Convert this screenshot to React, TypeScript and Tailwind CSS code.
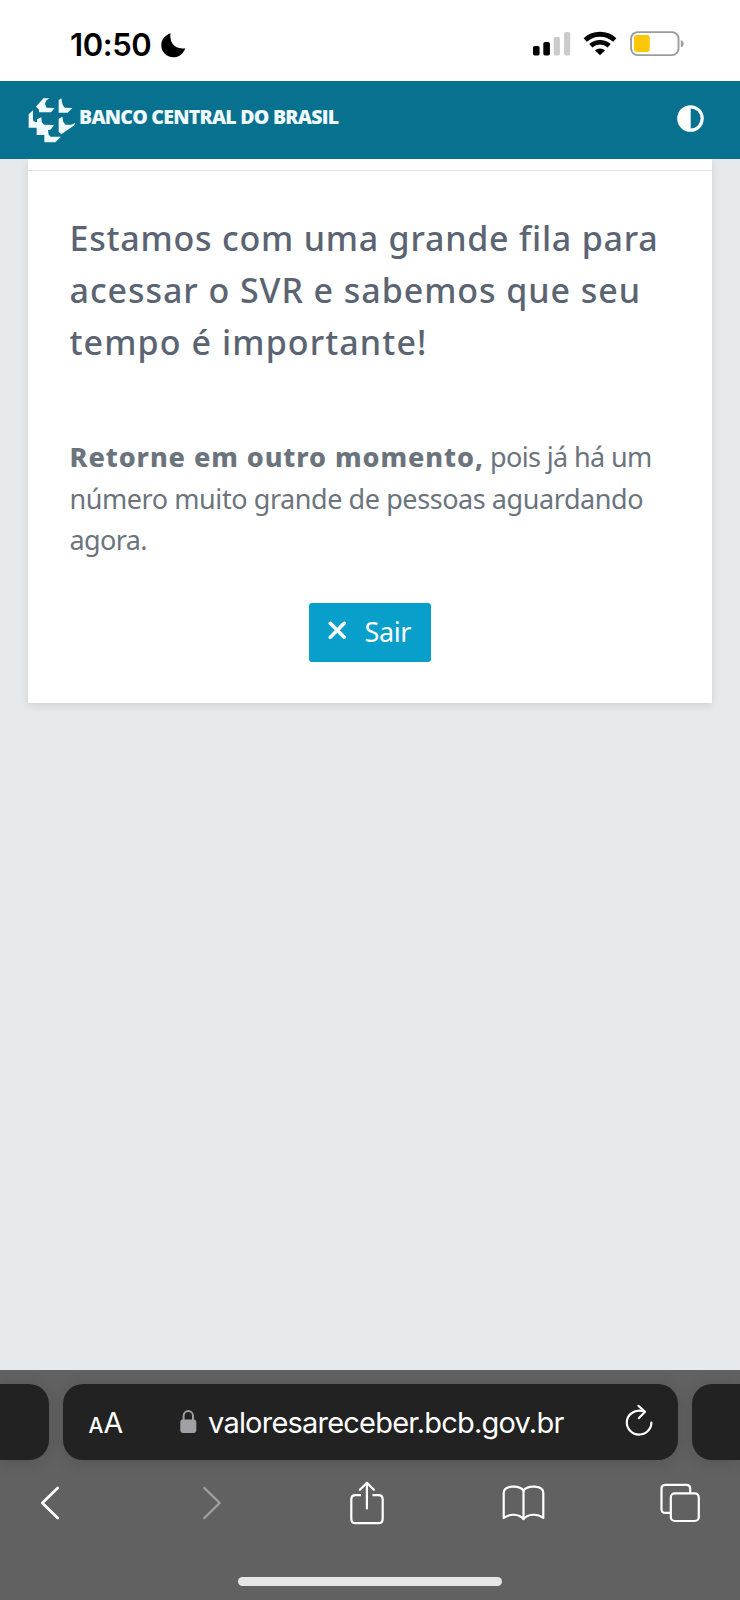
import React from 'react';

const StatusBar: React.FC = () => {
  return (
    <div className="flex h-[81px] items-start justify-between bg-white pl-[70px] pr-[55px] pt-[31px]">
      <div className="flex items-center">
        <span className="w-[90.5px] whitespace-nowrap font-['Inter'] text-[31px] font-semibold leading-[28px] tracking-[-0.4px] text-black">
          10:50
        </span>
        <svg width="25" height="25" viewBox="0 0 25 25" className="mt-px">
          <path d="M9.5 0.3C8.2 9.5 13.8 17 24.3 15.2C22.3 21 17.8 24.3 12.3 24.3C5.7 24.3 0.3 19 0.3 12.3C0.3 6.6 4 2.2 9.5 0.3Z" fill="#000" />
        </svg>
      </div>
      <div className="flex">
        <svg width="39" height="26" viewBox="0 0 39 26">
          <rect x="1" y="15" width="6.6" height="9.5" rx="1.8" fill="#000" />
          <rect x="11.3" y="11" width="6.6" height="13.5" rx="1.8" fill="#000" />
          <rect x="21.7" y="6" width="6.2" height="18.5" rx="1.8" fill="#cbcbcb" />
          <rect x="32" y="1" width="6.2" height="23.5" rx="1.8" fill="#cbcbcb" />
        </svg>
        <svg width="35" height="26" viewBox="0 0 35 26" className="ml-[12px]">
          <path d="M2.2 9C10.8 1.3 23.2 1.3 31.8 9" fill="none" stroke="#000" strokeWidth="4.8" />
          <path d="M7.8 14.8C13.2 10 20.8 10 26.2 14.8" fill="none" stroke="#000" strokeWidth="4.6" />
          <path d="M12 19.4C14.8 16.7 19.2 16.7 22 19.4L17 24.3Z" fill="#000" />
        </svg>
        <svg width="55" height="26" viewBox="0 0 55 26" className="ml-[12px]">
          <rect x="1.1" y="1.1" width="47.4" height="23" rx="6.5" fill="none" stroke="#9c9c9c" strokeWidth="1.9" />
          <rect x="4" y="4" width="15.8" height="17" rx="3" fill="#fbc708" />
          <path d="M50.8 9.2C54.6 10 54.6 15.4 50.8 16.2Z" fill="#9c9c9c" />
        </svg>
      </div>
    </div>
  );
};

const Header: React.FC = () => {
  return (
    <header className="relative z-10 flex h-[78px] items-center justify-between bg-[#08718f] pl-[28px] pr-[36px]">
      <div className="flex items-center">
        <svg width="49" height="47" viewBox="6 9 147 141" fill="#eefafd">
          <path d="M30 38L52 13H70L60 20L57 30L62 41L86 42L75 55H39V47Z" />
          <path d="M98 18L106 13L110 32L116 41L139 42L125 56H98Z" />
          <path d="M8 61L21 49V78L26 84H33V76L46 70L47 84L54 92L84 93L74 107L66 108L68 122L74 128H105L88 145H55V123H32V101H8Z" />
          <path d="M98 74L109 68L112 84L119 92H136L148 86L145 94L106 121L98 113Z" />
        </svg>
        <span className="ml-[2px] mt-[-6px] whitespace-nowrap font-['Open_Sans'] text-[19.5px] font-extrabold leading-none tracking-[-0.75px] text-[#eefafd]">
          BANCO CENTRAL DO BRASIL
        </span>
      </div>
      <svg width="27" height="27" viewBox="0 0 27 27" className="mt-[-3px]">
        <circle cx="13.5" cy="13.5" r="11.7" fill="none" stroke="#fff" strokeWidth="3.2" />
        <path d="M13.7 1A12.5 12.5 0 0 0 13.7 26Z" fill="#fff" />
      </svg>
    </header>
  );
};

const QueueCard: React.FC = () => {
  return (
    <main className="mx-[28px] h-[544px] bg-white font-['Noto_Sans',sans-serif] shadow-[0_3px_8px_rgba(0,0,0,0.1)]">
      <div className="h-[12px] border-b-[1.5px] border-[#dfe2e4]" />
      <div className="flex flex-col pl-[41.5px] pt-[41px]">
        <h1 className="whitespace-nowrap text-[34px] font-medium leading-[52px] text-[#5b6472]">
          <span className="block tracking-[0.78px]">Estamos com uma grande fila para</span>
          <span className="block tracking-[0.94px]">acessar o SVR e sabemos que seu</span>
          <span className="block tracking-[1.1px]">tempo é importante!</span>
        </h1>
        <p className="mt-[68px] whitespace-nowrap text-[27px] leading-[41.5px] text-[#6b747d]">
          <span className="flex">
            <strong className="w-[420.5px] font-extrabold tracking-[0.93px]">Retorne em outro momento,</strong>
            <span className="tracking-[-0.62px]">pois já há um</span>
          </span>
          <span className="block tracking-[-0.43px]">número muito grande de pessoas aguardando</span>
          <span className="block tracking-[-0.6px]">agora.</span>
        </p>
      </div>
      <button className="mx-auto mt-[42px] flex h-[59px] w-[122px] items-center rounded-[3px] bg-[#089fca] pl-[19px] text-white">
        <svg width="19" height="19" viewBox="0 0 19 19" className="mt-[-3px]">
          <path d="M2.3 2.3L16.2 16.2M16.2 2.3L2.3 16.2" stroke="#fff" strokeWidth="3.6" strokeLinecap="round" />
        </svg>
        <span className="ml-[17.5px] mt-[-2px] text-[27px] leading-none tracking-[-0.4px]">Sair</span>
      </button>
    </main>
  );
};

const AddressBar: React.FC = () => {
  return (
    <div className="flex h-[76px] gap-[14px]">
      <div className="w-[48.5px] shrink-0 rounded-r-[20px] bg-[#222222] shadow-[0_2px_16px_rgba(0,0,0,0.13)]" />
      <div className="flex flex-1 items-center rounded-[20px] bg-[#222222] pl-[26px] font-['Inter'] text-white shadow-[0_2px_16px_rgba(0,0,0,0.13)]">
        <div className="mt-[3px] flex w-[91px] items-baseline leading-none">
          <span className="text-[21px] font-medium">A</span>
          <span className="text-[28.5px]">A</span>
        </div>
        <svg width="17" height="24" viewBox="0 0 17 24">
          <rect x="0.3" y="9.5" width="16" height="13.5" rx="2.4" fill="#a09fa5" />
          <path d="M3.6 10.5V6.2C3.6 -0.6 13 -0.6 13 6.2V10.5" fill="none" stroke="#a09fa5" strokeWidth="2" />
        </svg>
        <span className="ml-[11.5px] mt-[2px] w-[417px] shrink-0 whitespace-nowrap text-[29px] leading-none tracking-[-0.78px]">
          valoresareceber.bcb.gov.br
        </span>
        <svg width="28" height="34" viewBox="0 0 28 34" className="mt-[-1px] shrink-0" fill="none" stroke="#fff" strokeWidth="2.2" strokeLinecap="round" strokeLinejoin="round">
          <path d="M18.6 7.3C9.5 4.7 1.8 10.8 1.8 18.3C1.8 25.2 7.3 30.6 14 30.6C20.9 30.6 26.4 25.2 26.4 18.5" />
          <path d="M13.4 1.8L20 7.8L13.8 14.2" />
        </svg>
      </div>
      <div className="w-[48.5px] shrink-0 rounded-l-[20px] bg-[#222222] shadow-[0_2px_16px_rgba(0,0,0,0.13)]" />
    </div>
  );
};

const Toolbar: React.FC = () => {
  return (
    <nav className="flex h-[86px] items-center pl-[40px]">
      <svg width="20" height="34" viewBox="0 0 20 34" fill="none" stroke="#fff" strokeWidth="2.6" strokeLinecap="round" strokeLinejoin="round">
        <path d="M17.7 2L2.3 17L17.7 32" />
      </svg>
      <svg width="20" height="34" viewBox="0 0 20 34" className="ml-[142px]" fill="none" stroke="#a0a0a0" strokeWidth="2.4" strokeLinecap="round" strokeLinejoin="round">
        <path d="M2.3 2L17.7 17L2.3 32" />
      </svg>
      <svg width="34" height="44" viewBox="0 0 34 44" className="ml-[127.5px]" fill="none" stroke="#fff" strokeWidth="2.2" strokeLinecap="round" strokeLinejoin="round">
        <path d="M11 14.2H5.5Q1.3 14.2 1.3 18.4V38Q1.3 42.2 5.5 42.2H28.5Q32.7 42.2 32.7 38V18.4Q32.7 14.2 28.5 14.2H22.5" strokeLinecap="butt" />
        <path d="M16.9 27.5V2M9.9 8.8L16.9 1.8L23.9 8.8" />
      </svg>
      <svg width="43" height="36" viewBox="0 0 43 36" className="ml-[118.5px] mt-px" fill="none" stroke="#fff" strokeWidth="2.2" strokeLinejoin="round">
        <path d="M21.5 34.2C17 28.6 7.5 28.4 1.7 33V8C1.7 0.2 17.5 -0.3 21.5 5.6C25.5 -0.3 41.3 0.2 41.3 8V33C35.5 28.4 26 28.6 21.5 34.2Z" />
        <path d="M21.5 5.6V34" />
      </svg>
      <svg width="40" height="40" viewBox="0 0 40 40" className="ml-[115px]" fill="none" stroke="#fff" strokeWidth="2.2">
        <path d="M10.5 29.9H5.5Q1.5 29.9 1.5 25.9V5.8Q1.5 1.8 5.5 1.8H26.2Q30.2 1.8 30.2 5.8V10.4" />
        <rect x="10.8" y="10.4" width="28" height="27.6" rx="4" />
      </svg>
    </nav>
  );
};

export default function App() {
  return (
    <div className="flex h-[1600px] w-[740px] flex-col overflow-hidden bg-[#e6eaed]">
      <StatusBar />
      <Header />
      <QueueCard />
      <footer className="mt-auto h-[230px] bg-[#616161] pt-[13.5px]">
        <AddressBar />
        <Toolbar />
        <div className="mx-auto mt-[31.5px] h-[9px] w-[264px] rounded-full bg-[#e6e6e6]" />
      </footer>
    </div>
  );
}
